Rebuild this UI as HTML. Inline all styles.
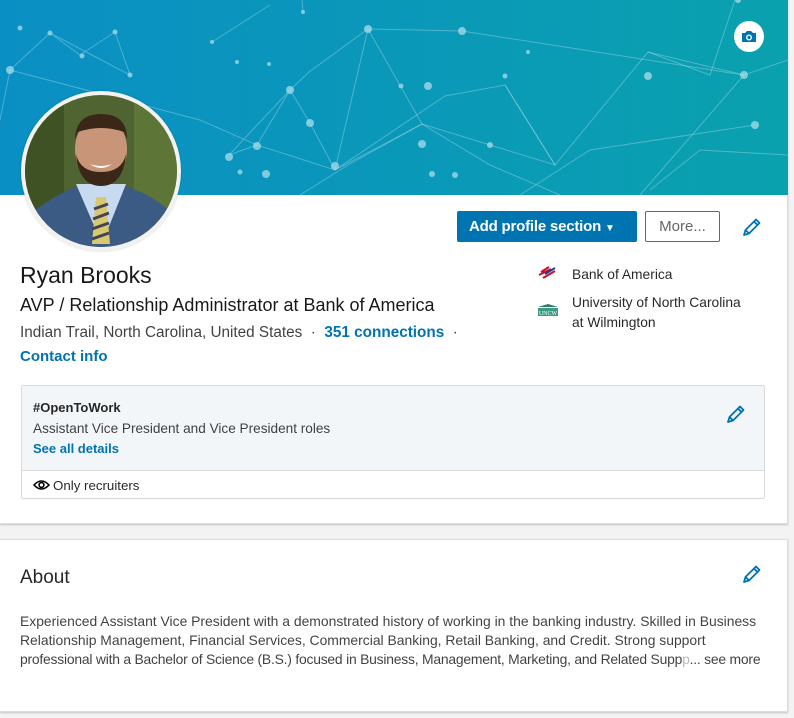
<!DOCTYPE html>
<html><head><style>
body{margin:0;width:794px;height:718px;background:#f3f3f3;font-family:"Liberation Sans",sans-serif;position:relative;overflow:hidden;color:rgba(0,0,0,.9)}
.a{position:absolute;white-space:nowrap}
.card{position:absolute;left:0;width:787px;background:#fff;border:1px solid #dcdcdc;border-left:none;box-shadow:0 1px 2px rgba(0,0,0,.2)}
.pen{position:absolute}
</style></head><body>
<div class="card" style="top:0;height:522px"></div>
<svg class="a" style="left:0;top:0" width="788" height="195">
<defs><linearGradient id="g" x1="0" x2="1"><stop offset="0" stop-color="#0a8fc4"/><stop offset="1" stop-color="#0aa1ae"/></linearGradient></defs>
<rect width="788" height="195" fill="url(#g)"/>
<g stroke="#9fd8e6" stroke-opacity=".45" stroke-width="1" fill="none">
<polyline points="10,70 50,33 80,55 115,32 130,75 50,33"/>
<polyline points="10,70 200,120 257,145 290,90 310,123 335,170"/>
<polyline points="290,90 229,155 257,145 335,170 422,124 368,29 309,72 290,90"/>
<polyline points="303,12 302,0"/><polyline points="212,42 270,5"/>
<polyline points="368,29 335,170 445,96 505,85 555,165 648,52 710,75 735,0"/>
<polyline points="648,52 744,75 788,60"/><polyline points="368,29 462,31 744,75"/>
<polyline points="505,85 555,165 422,124"/><polyline points="422,124 490,165 560,195"/>
<polyline points="422,124 348,165 300,195"/><polyline points="744,75 640,195"/>
<polyline points="755,125 590,150 520,195"/><polyline points="10,70 0,120"/>
<polyline points="650,190 700,150 788,155"/>
</g>
<g fill="#a8dce8" fill-opacity=".75">
<circle cx="10" cy="70" r="4"/><circle cx="20" cy="28" r="2.5"/><circle cx="50" cy="33" r="2.5"/><circle cx="82" cy="56" r="2.5"/><circle cx="115" cy="32" r="2.5"/><circle cx="130" cy="75" r="2.5"/>
<circle cx="143" cy="135" r="4"/><circle cx="154" cy="120" r="2.5"/><circle cx="212" cy="42" r="2"/><circle cx="290" cy="90" r="4"/><circle cx="310" cy="123" r="4"/><circle cx="257" cy="146" r="4"/><circle cx="229" cy="157" r="4"/><circle cx="240" cy="172" r="2.5"/><circle cx="266" cy="174" r="4"/>
<circle cx="237" cy="62" r="2"/><circle cx="269" cy="64" r="2"/><circle cx="303" cy="12" r="2"/><circle cx="368" cy="29" r="4"/><circle cx="335" cy="166" r="4"/><circle cx="422" cy="144" r="4"/><circle cx="401" cy="86" r="2.5"/><circle cx="428" cy="86" r="4"/>
<circle cx="462" cy="31" r="4"/><circle cx="505" cy="76" r="2.5"/><circle cx="528" cy="52" r="2"/><circle cx="648" cy="76" r="4"/><circle cx="744" cy="75" r="4"/><circle cx="755" cy="125" r="4"/><circle cx="738" cy="0" r="3"/><circle cx="432" cy="174" r="3"/><circle cx="490" cy="145" r="3"/><circle cx="455" cy="175" r="3"/>
</g>
</svg>
<div class="a" style="left:734px;top:21px;width:30px;height:31px;border-radius:50%;background:#fff"></div>
<svg class="a" style="left:740px;top:29px" width="18" height="15" viewBox="0 0 18 15"><path d="M2 4h3l2-2h4l2 2h3v9H2z" fill="#0073b1"/><circle cx="9" cy="8.5" r="3" fill="#fff"/><circle cx="9" cy="8.5" r="1.6" fill="#0073b1"/></svg>
<div class="a" style="left:21px;top:91px;width:160px;height:160px;border-radius:50%;background:#f2f2f2;box-shadow:0 0 2px rgba(0,0,0,.2)"></div>
<svg class="a" style="left:24px;top:94px" width="154" height="154" viewBox="0 0 154 154">
<defs><clipPath id="c"><ellipse cx="77" cy="77" rx="76" ry="76"/></clipPath></defs>
<g clip-path="url(#c)">
<rect width="154" height="154" fill="#4f6430"/>
<rect x="0" y="0" width="40" height="154" fill="#3e5224"/><rect x="110" y="0" width="44" height="154" fill="#5e7538"/>
<path d="M0 125 Q30 100 55 92 L100 92 Q130 100 154 125 V154 H0z" fill="#3b5a84"/>
<path d="M52 90 L78 150 L102 90z" fill="#c8daf0"/>
<path d="M72 103 L82 103 L86 150 L68 150z" fill="#d8c870"/>
<path d="M70 115 l14 -5 M69 125 l16 -6 M68 135 l17 -6 M68 145 l17 -6" stroke="#445" stroke-width="3"/>
<ellipse cx="77" cy="55" rx="26" ry="33" fill="#c99579"/>
<path d="M51 45 Q52 20 77 20 Q103 20 103 45 L100 38 Q77 30 54 38z" fill="#3a2718"/>
<path d="M52 60 Q55 92 77 92 Q99 92 102 60 Q98 78 77 78 Q56 78 52 60z" fill="#3a2718"/>
<path d="M66 70 Q77 78 88 70 Q77 74 66 70z" fill="#fff"/>
</g></svg>
<div class="a" style="left:457px;top:211px;width:180px;height:31px;background:#0073b1;border-radius:2px;color:#fff;font-weight:bold;font-size:15px;line-height:31px;text-indent:12px;letter-spacing:-.2px">Add profile section <span style="font-size:10px">▼</span></div>
<div class="a" style="left:645px;top:211px;width:73px;height:29px;border:1px solid #666;border-radius:2px;color:#666;font-size:15px;line-height:29px;text-align:center">More...</div>
<svg class="pen" style="left:741px;top:217px" width="22" height="20" viewBox="0 0 22 20"><path d="M3 18l1.5-5L15 2.5l3.5 3.5L8 16.5zM13 4.5l3.5 3.5M4.5 13l3.5 3.5" fill="none" stroke="#0073b1" stroke-width="1.8" stroke-linejoin="round"/></svg>
<div class="a" style="left:20px;top:262px;font-size:23px;color:rgba(0,0,0,.9)">Ryan Brooks</div>
<div class="a" style="left:20px;top:295px;font-size:18px">AVP / Relationship Administrator at Bank of America</div>
<div class="a" style="left:20px;top:324px;font-size:15.3px;color:rgba(0,0,0,.75)">Indian Trail, North Carolina, United States &nbsp;·&nbsp; <b style="color:#0073b1">351 connections</b> &nbsp;·</div>
<div class="a" style="left:20px;top:348px;font-size:15px;color:#0073b1;font-weight:bold">Contact info</div>
<svg class="a" style="left:537px;top:266px" width="22" height="14" viewBox="0 0 22 14"><path d="M4 6 L12 1 M2 9 L14 3 M6 12 L18 5" stroke="#c8102e" stroke-width="2"/><path d="M8 8 l10 -6" stroke="#1c3f94" stroke-width="2"/></svg>
<div class="a" style="left:572px;top:267px;font-size:13.8px;color:rgba(0,0,0,.85)">Bank of America</div>
<svg class="a" style="left:537px;top:303px" width="22" height="14" viewBox="0 0 22 14"><path d="M1 4h20l-10-3z" fill="#2e7d6a"/><rect x="1" y="5" width="20" height="8" fill="#3f9a84"/><text x="11" y="12" font-size="6" fill="#fff" text-anchor="middle" font-family="Liberation Serif">UNCW</text></svg>
<div class="a" style="left:572px;top:293px;font-size:13.8px;line-height:19.5px;color:rgba(0,0,0,.85)">University of North Carolina<br>at Wilmington</div>
<div class="a" style="left:21px;top:385px;width:742px;height:112px;border:1px solid #d9d9d9;border-radius:2px;background:#fff"></div>
<div class="a" style="left:22px;top:386px;width:742px;height:84px;background:#f3f6f8;border-bottom:1px solid #d9d9d9"></div>
<div class="a" style="left:33px;top:400px;font-size:13px;font-weight:bold;color:rgba(0,0,0,.85)">#OpenToWork</div>
<div class="a" style="left:33px;top:421px;font-size:13.6px;color:rgba(0,0,0,.75)">Assistant Vice President and Vice President roles</div>
<div class="a" style="left:33px;top:441px;font-size:13px;font-weight:bold;color:#0073b1">See all details</div>
<svg class="pen" style="left:725px;top:404px" width="22" height="20" viewBox="0 0 22 20"><path d="M3 18l1.5-5L15 2.5l3.5 3.5L8 16.5zM13 4.5l3.5 3.5M4.5 13l3.5 3.5" fill="none" stroke="#0073b1" stroke-width="1.8" stroke-linejoin="round"/></svg>
<svg class="a" style="left:33px;top:478px" width="17" height="14" viewBox="0 0 17 14"><path d="M1 7Q8.5-1 16 7Q8.5 15 1 7z" fill="none" stroke="#000" stroke-width="1.6"/><circle cx="8.5" cy="7" r="2.4" fill="none" stroke="#000" stroke-width="1.6"/></svg>
<div class="a" style="left:53px;top:478px;font-size:13.3px;color:rgba(0,0,0,.85)">Only recruiters</div>
<div class="card" style="top:539px;height:171px"></div>
<div class="a" style="left:20px;top:567px;font-size:19px;color:rgba(0,0,0,.85)">About</div>
<svg class="pen" style="left:741px;top:564px" width="22" height="20" viewBox="0 0 22 20"><path d="M3 18l1.5-5L15 2.5l3.5 3.5L8 16.5zM13 4.5l3.5 3.5M4.5 13l3.5 3.5" fill="none" stroke="#0073b1" stroke-width="1.8" stroke-linejoin="round"/></svg>
<div class="a" style="left:20px;top:612px;font-size:13.9px;line-height:19px;color:rgba(0,0,0,.75)">Experienced Assistant Vice President with a demonstrated history of working in the banking industry. Skilled in Business<br>Relationship Management, Financial Services, Commercial Banking, Retail Banking, and Credit. Strong support<br><span style="letter-spacing:-.22px">professional with a Bachelor of Science (B.S.) focused in Business, Management, Marketing, and Related Supp<span style="color:#bbb">p</span>... see more</span></div>
</body></html>
